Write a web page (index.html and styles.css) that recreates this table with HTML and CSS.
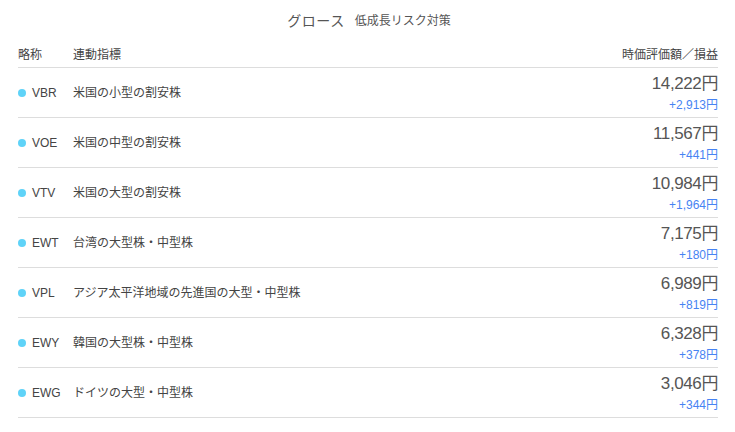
FILE: index.html
```html
<!DOCTYPE html>
<html lang="ja">
<head>
<meta charset="utf-8">
<link rel="stylesheet" href="styles.css">
</head>
<body>
<div class="page">
  <h1 class="title"><span class="title-main">グロース</span><span class="title-sub">低成長リスク対策</span></h1>
  <div class="head">
    <span class="col-code">略称</span>
    <span class="col-name">連動指標</span>
    <span class="col-value">時価評価額／損益</span>
  </div>
  <div class="row">
    <span class="col-code"><i class="dot"></i>VBR</span>
    <span class="col-name">米国の小型の割安株</span>
    <span class="col-value"><span class="amount">14,222円</span><span class="gain">+2,913円</span></span>
  </div>
  <div class="row">
    <span class="col-code"><i class="dot"></i>VOE</span>
    <span class="col-name">米国の中型の割安株</span>
    <span class="col-value"><span class="amount">11,567円</span><span class="gain">+441円</span></span>
  </div>
  <div class="row">
    <span class="col-code"><i class="dot"></i>VTV</span>
    <span class="col-name">米国の大型の割安株</span>
    <span class="col-value"><span class="amount">10,984円</span><span class="gain">+1,964円</span></span>
  </div>
  <div class="row">
    <span class="col-code"><i class="dot"></i>EWT</span>
    <span class="col-name">台湾の大型株・中型株</span>
    <span class="col-value"><span class="amount">7,175円</span><span class="gain">+180円</span></span>
  </div>
  <div class="row">
    <span class="col-code"><i class="dot"></i>VPL</span>
    <span class="col-name">アジア太平洋地域の先進国の大型・中型株</span>
    <span class="col-value"><span class="amount">6,989円</span><span class="gain">+819円</span></span>
  </div>
  <div class="row">
    <span class="col-code"><i class="dot"></i>EWY</span>
    <span class="col-name">韓国の大型株・中型株</span>
    <span class="col-value"><span class="amount">6,328円</span><span class="gain">+378円</span></span>
  </div>
  <div class="row">
    <span class="col-code"><i class="dot"></i>EWG</span>
    <span class="col-name">ドイツの大型・中型株</span>
    <span class="col-value"><span class="amount">3,046円</span><span class="gain">+344円</span></span>
  </div>
</div>
</body>
</html>
```
FILE: styles.css
```css
* { box-sizing: border-box; }
html, body { margin: 0; padding: 0; background: #fff; }
body {
  font-family: "Liberation Sans", "Noto Sans CJK JP", sans-serif;
  color: #555;
}
.page {
  width: 735px;
  padding: 0 17px 0 18px;
}
.title {
  margin: 0;
  height: 40px;
  display: flex;
  align-items: center;
  justify-content: center;
  gap: 10px;
  font-weight: normal;
  color: #555;
  padding-left: 2px;
  padding-bottom: 1px;
}
.title-main { font-size: 14px; letter-spacing: 0.5px; }
.title-sub { font-size: 12px; }
.head {
  display: flex;
  align-items: center;
  height: 28px;
  padding-top: 2px;
  border-bottom: 1px solid #ddd;
  font-size: 12px;
  color: #444;
  line-height: 14px;
}
.col-code { width: 55px; display: flex; align-items: center; }
.col-name { flex: 1; }
.col-value { text-align: right; }
.row {
  display: flex;
  align-items: center;
  height: 50px;
  border-bottom: 1px solid #ddd;
  font-size: 12px;
  color: #444;
  line-height: 14px;
}
.row .col-code { padding-top: 1px; }
.row .col-name { padding-top: 1px; }
.dot {
  display: inline-block;
  width: 8px;
  height: 8px;
  border-radius: 50%;
  background: #5fd3f8;
  margin-right: 6px;
}
.row .col-value {
  display: flex;
  flex-direction: column;
  align-items: flex-end;
  padding-top: 1px;
}
.amount {
  font-size: 17px;
  line-height: 20px;
  letter-spacing: -0.4px;
  color: #555;
}
.gain {
  font-size: 12px;
  line-height: 14px;
  color: #4683f3;
  margin-top: 4px;
}
```
